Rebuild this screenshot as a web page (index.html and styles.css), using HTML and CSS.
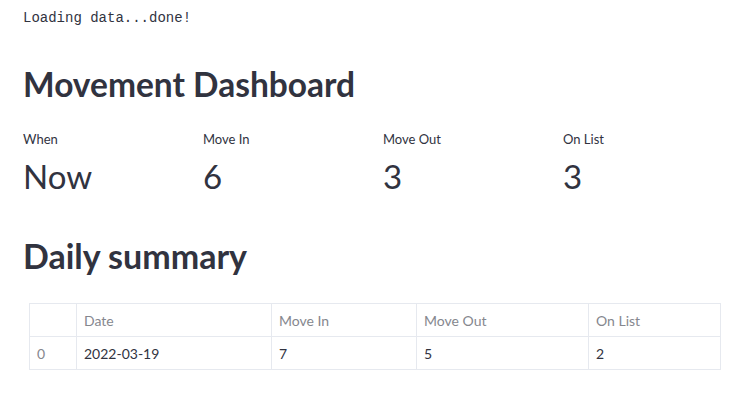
FILE: index.html
```html
<!DOCTYPE html>
<html>
<head>
<meta charset="utf-8">
<link rel="stylesheet" href="styles.css">
</head>
<body>
<main class="app">
  <div class="loading">Loading data...done!</div>
  <h1 class="title">Movement Dashboard</h1>
  <div class="metrics">
    <div class="metric"><div class="metric-label">When</div><div class="metric-value">Now</div></div>
    <div class="metric"><div class="metric-label">Move In</div><div class="metric-value">6</div></div>
    <div class="metric"><div class="metric-label">Move Out</div><div class="metric-value">3</div></div>
    <div class="metric"><div class="metric-label">On List</div><div class="metric-value">3</div></div>
  </div>
  <h2 class="subtitle">Daily summary</h2>
  <table class="frame">
    <thead>
      <tr><th class="idx"></th><th class="c-date">Date</th><th class="c-in">Move In</th><th class="c-out">Move Out</th><th class="c-list">On List</th></tr>
    </thead>
    <tbody>
      <tr><td class="idx">0</td><td>2022-03-19</td><td>7</td><td>5</td><td>2</td></tr>
    </tbody>
  </table>
</main>
</body>
</html>
```
FILE: styles.css
```css
html, body {
  margin: 0;
  padding: 0;
  background: #ffffff;
}
.app {
  padding: 0 0 0 23px;
  font-family: Lato, "Noto Sans", sans-serif;
  color: #31333f;
}
.loading {
  font-family: "Liberation Mono", "DejaVu Sans Mono", monospace;
  font-size: 14px;
  line-height: 20px;
  padding-top: 8px;
  color: #31333f;
}
.title {
  margin: 0;
  padding-top: 34px;
  font-size: 33.5px;
  line-height: 44px;
  font-weight: 700;
}
.metrics {
  display: flex;
  padding-top: 24px;
}
.metric {
  width: 180px;
}
.metric-label {
  font-size: 13px;
  line-height: 18px;
}
.metric-value {
  margin-top: 6px;
  font-size: 33px;
  line-height: 44px;
  font-weight: 400;
}
.subtitle {
  margin: 0;
  padding-top: 36px;
  font-size: 34px;
  line-height: 44px;
  font-weight: 700;
}
.frame {
  margin: 25px 0 0 6px;
  border-collapse: collapse;
  font-size: 14px;
}
.frame th, .frame td {
  border: 1px solid #e6e9ef;
  height: 32px;
  padding: 0 7px;
  text-align: left;
  font-weight: 400;
}
.frame th {
  color: #85878e;
}
.frame td {
  color: #31333f;
}
.frame td.idx {
  color: #85878e;
}
.idx { width: 32px; }
.c-date { width: 180px; }
.c-in { width: 130px; }
.c-out { width: 157px; }
.c-list { width: 117px; }
```
